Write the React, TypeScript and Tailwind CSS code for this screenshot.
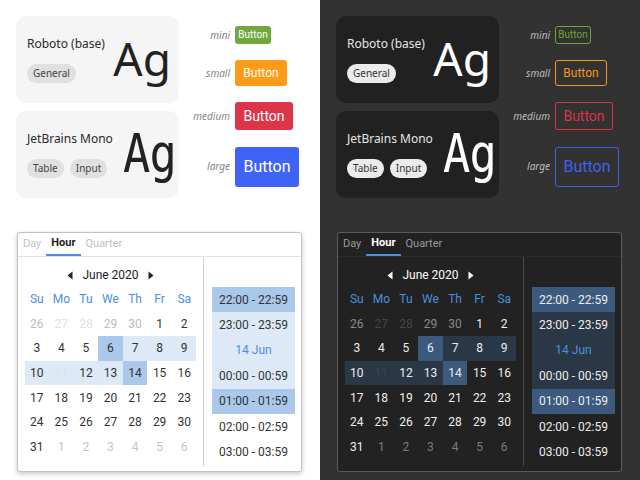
import React from 'react';

type Mode = { dark: boolean };

const SANS = "font-['Noto_Sans',sans-serif]";
const ROBOTO = "font-['Roboto',sans-serif]";

const FontCard: React.FC<Mode & { title: string; chips: string[]; mono?: boolean }> = ({ dark, title, chips, mono }) => (
  <div className={`flex h-[87px] w-[163px] items-center justify-between rounded-[10px] pl-[11px] pr-[8px] ${dark ? 'bg-[#212121]' : 'bg-[#f5f5f5]'}`}>
    <div className="flex flex-col">
      <div className={`${SANS} mb-[12px] text-[12px] leading-[16px] whitespace-nowrap ${dark ? 'text-[#e6e6e6]' : 'text-[#2a2a2a]'}`}>{title}</div>
      <div className="flex gap-[6px]">
        {chips.map((c) => (
          <span key={c} className={`${SANS} flex h-[19px] items-center rounded-full px-[6px] text-[10px] ${dark ? 'bg-[#ebebeb] text-[#333]' : 'bg-[#e0e0e0] text-[#444]'}`}>
            {c}
          </span>
        ))}
      </div>
    </div>
    {mono ? (
      <div className={`font-['DejaVu_Sans_Mono',monospace] mr-[3px] -mt-[1px] origin-right scale-x-[0.84] text-[54px] leading-none tracking-[-1px] ${dark ? 'text-white' : 'text-[#222]'}`}>Ag</div>
    ) : (
      <div className={`${SANS} -mt-[3px] text-[46px] leading-none ${dark ? 'text-white' : 'text-[#222]'}`}>Ag</div>
    )}
  </div>
);

const ButtonRow: React.FC<Mode & { label: string; cls: string }> = ({ dark, label, cls }) => (
  <div className="flex items-center">
    <span className={`${SANS} mr-[5px] w-[47px] text-right text-[10px] font-normal italic ${dark ? 'text-[#bdbdbd]' : 'text-[#858585]'}`}>{label}</span>
    <button className={`${ROBOTO} flex items-center justify-center rounded-[3px] leading-none ${cls}`}>Button</button>
  </div>
);

const Buttons: React.FC<Mode> = ({ dark }) => (
  <div className="ml-[4px] flex flex-col gap-4 pt-[10px]">
    <ButtonRow dark={dark} label="mini" cls={`h-[18px] w-[36px] text-[10px] ${dark ? 'border border-[#6ea33d] text-[#6ea33d]' : 'bg-[#70a83e] text-white'}`} />
    <ButtonRow dark={dark} label="small" cls={`h-[26px] w-[52px] text-[12px] ${dark ? 'border border-[#f7951c] text-[#f7951c]' : 'bg-[#ff9b17] text-white'}`} />
    <ButtonRow dark={dark} label="medium" cls={`h-[28px] w-[58px] text-[14px] ${dark ? 'border border-[#db3446] text-[#db3446]' : 'bg-[#dd3447] text-white'}`} />
    <ButtonRow dark={dark} label="large" cls={`mt-[1px] h-[40px] w-[64px] text-[16px] ${dark ? 'border border-[#3f63ea] text-[#3f63ea]' : 'bg-[#3f63f6] text-white'}`} />
  </div>
);

type Cell = { d: number; tone: 'norm' | 'other' | 'off' | 'next'; sel?: 'strong' | 'light' };

const rows: Cell[][] = [
  [{ d: 26, tone: 'other' }, { d: 27, tone: 'off' }, { d: 28, tone: 'off' }, { d: 29, tone: 'other' }, { d: 30, tone: 'other' }, { d: 1, tone: 'norm' }, { d: 2, tone: 'norm' }],
  [{ d: 3, tone: 'norm' }, { d: 4, tone: 'norm' }, { d: 5, tone: 'norm' }, { d: 6, tone: 'norm', sel: 'strong' }, { d: 7, tone: 'norm', sel: 'light' }, { d: 8, tone: 'norm', sel: 'light' }, { d: 9, tone: 'norm', sel: 'light' }],
  [{ d: 10, tone: 'norm', sel: 'light' }, { d: 11, tone: 'off', sel: 'light' }, { d: 12, tone: 'norm', sel: 'light' }, { d: 13, tone: 'norm', sel: 'light' }, { d: 14, tone: 'norm', sel: 'strong' }, { d: 15, tone: 'norm' }, { d: 16, tone: 'norm' }],
  [17, 18, 19, 20, 21, 22, 23].map((d) => ({ d, tone: 'norm' as const })),
  [24, 25, 26, 27, 28, 29, 30].map((d) => ({ d, tone: 'norm' as const })),
  [{ d: 31, tone: 'norm' }, ...[1, 2, 3, 4, 5, 6].map((d) => ({ d, tone: 'next' as const }))],
];

const toneCls = (dark: boolean, t: Cell['tone']) => {
  if (t === 'norm') return dark ? 'text-[#eeeeee]' : 'text-[#333]';
  if (t === 'other') return dark ? 'text-[#8a8a8a]' : 'text-[#bdbdbd]';
  if (t === 'off') return dark ? 'text-[#464646]' : 'text-[#e2e2e2]';
  return dark ? 'text-[#7c7c7c]' : 'text-[#c4c4c4]';
};

const selCls = (dark: boolean, s?: Cell['sel']) => {
  if (s === 'strong') return dark ? 'bg-[#3c5a7e]' : 'bg-[#aac8e9]';
  if (s === 'light') return dark ? 'bg-[#2a3747]' : 'bg-[#dde9f6]';
  return '';
};

const times: { t: string; sel?: 'strong' | 'light'; day?: boolean }[] = [
  { t: '22:00 - 22:59', sel: 'strong' },
  { t: '23:00 - 23:59', sel: 'light' },
  { t: '14 Jun', sel: 'light', day: true },
  { t: '00:00 - 00:59', sel: 'light' },
  { t: '01:00 - 01:59', sel: 'strong' },
  { t: '02:00 - 02:59' },
  { t: '03:00 - 03:59' },
];

const Arrow: React.FC<{ left?: boolean; dark: boolean }> = ({ left, dark }) => (
  <svg width="6" height="9" viewBox="0 0 6 9" className={dark ? 'fill-white' : 'fill-[#222]'}>
    {left ? <path d="M5.5 0.5 L0.5 4.5 L5.5 8.5 Z" /> : <path d="M0.5 0.5 L5.5 4.5 L0.5 8.5 Z" />}
  </svg>
);

const Calendar: React.FC<Mode> = ({ dark }) => (
  <div className={`${ROBOTO} ml-[17px] mt-[34px] flex h-[240px] w-[285px] flex-col overflow-hidden rounded-[3px] border ${dark ? 'border-[#5a5a5a] bg-[#222]' : 'border-[#c2c2c2] bg-white shadow-[0_2px_5px_rgba(0,0,0,0.22)]'}`}>
    <div className={`flex h-[24px] border-b text-[11px] ${dark ? 'border-[#2b2b2b]' : 'border-[#e3e3e3]'}`}>
      <div className={`flex items-center px-[5px] ${dark ? 'text-[#9a9a9a]' : 'text-[#c2c2c2]'}`}>Day</div>
      <div className={`flex items-center border-b-2 border-[#4a8fdf] px-[5px] font-bold ${dark ? 'text-white' : 'text-[#222]'}`}>Hour</div>
      <div className={`flex items-center px-[5px] ${dark ? 'text-[#9a9a9a]' : 'text-[#c2c2c2]'}`}>Quarter</div>
    </div>
    <div className="flex flex-1 pb-[5px]">
      <div className="flex w-[185px] flex-col items-center pt-[6px]">
        <div className={`flex h-[24px] items-center gap-[9px] text-[12px] ${dark ? 'text-white' : 'text-[#222]'}`}>
          <Arrow left dark={dark} />
          <span>June 2020</span>
          <Arrow dark={dark} />
        </div>
        <div className="grid w-[172px] grid-cols-7 auto-rows-[24.6px] text-[12px]">
          {['Su', 'Mo', 'Tu', 'We', 'Th', 'Fr', 'Sa'].map((w) => (
            <div key={w} className="flex items-center justify-center text-[#4a8fdf]">{w}</div>
          ))}
          {rows.flat().map((c, i) => (
            <div key={i} className={`flex items-center justify-center ${toneCls(dark, c.tone)} ${selCls(dark, c.sel)}`}>{c.d}</div>
          ))}
        </div>
      </div>
      <div className={`flex flex-1 flex-col border-l pl-[8px] pr-[6px] pt-[30px] text-[12px] ${dark ? 'border-[#4a4a4a]' : 'border-[#cfcfcf]'}`}>
        {times.map((x) => (
          <div key={x.t} className={`flex h-[25.4px] shrink-0 items-center justify-center ${x.day ? 'text-[#4a8fdf]' : dark ? 'text-[#eeeeee]' : 'text-[#333]'} ${selCls(dark, x.sel)}`}>
            {x.t}
          </div>
        ))}
      </div>
    </div>
  </div>
);

const Half: React.FC<Mode> = ({ dark }) => (
  <div className={`flex h-[480px] w-[320px] flex-col ${dark ? 'bg-[#323232]' : 'bg-white'}`}>
    <div className="flex pl-4 pt-4">
      <div className="flex flex-col gap-2">
        <FontCard dark={dark} title="Roboto (base)" chips={['General']} />
        <FontCard dark={dark} title="JetBrains Mono" chips={['Table', 'Input']} mono />
      </div>
      <Buttons dark={dark} />
    </div>
    <Calendar dark={dark} />
  </div>
);

export default function App() {
  return (
    <div className="flex h-[480px] w-[640px] overflow-hidden">
      <Half dark={false} />
      <Half dark />
    </div>
  );
}
